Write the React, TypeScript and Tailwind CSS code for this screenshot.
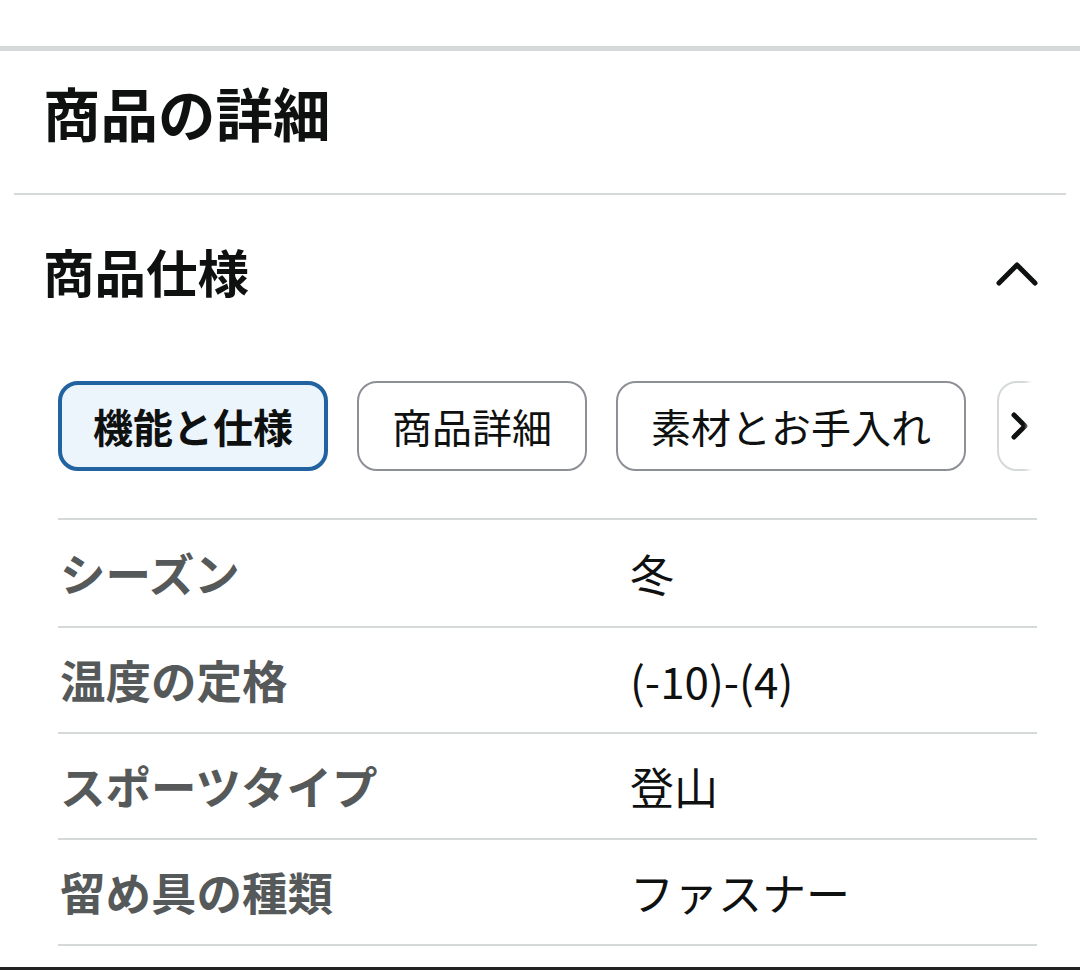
import { ReactNode } from 'react';

const font = { fontFamily: '"Noto Sans CJK JP", "Noto Sans", sans-serif' };

const specs = [
    { label: 'シーズン', value: '冬' },
    { label: '温度の定格', value: '(-10)-(4)' },
    { label: 'スポーツタイプ', value: '登山' },
    { label: '留め具の種類', value: 'ファスナー' },
];

function Tab({ children, active, width }: { children: ReactNode; active?: boolean; width: string }) {
    return (
        <div
            className={`${width} h-[90px] shrink-0 flex items-center justify-center rounded-[20px] text-[40px] leading-none text-[#0f1111] ${
                active ? 'border-[4px] border-[#2162a1] bg-[#edf5fc] font-bold' : 'border-2 border-[#8d9096] bg-white'
            }`}
        >
            {children}
        </div>
    );
}

export default function App() {
    return (
        <div className="w-[1080px] h-[970px] bg-white flex flex-col overflow-hidden" style={font}>
            <div className="h-[46px] shrink-0" />
            <div className="h-[5px] shrink-0 bg-[#d5d9d9]" />

            <div className="h-[142px] shrink-0 flex items-center pl-[43px] pb-[18px]">
                <h1 className="text-[57.5px] font-bold leading-none text-[#0f1111]">商品の詳細</h1>
            </div>
            <div className="mx-[14px] h-[2px] shrink-0 bg-[#d5d9d9]" />

            <div className="h-[158px] shrink-0 flex items-center justify-between pl-[43px] pr-[42px] pb-[6px]">
                <h2 className="text-[51.5px] font-bold leading-none text-[#0f1111]">商品仕様</h2>
                <svg width="42" height="28" viewBox="0 0 42 28" fill="none" className="mt-[4px]">
                    <path d="M3 24 L21 6 L39 24" stroke="#0f1111" strokeWidth="5" strokeLinecap="round" strokeLinejoin="round" />
                </svg>
            </div>

            <div className="mt-[28px] ml-[58px] w-[974px] relative overflow-hidden shrink-0">
                <div className="flex gap-[29px]">
                    <Tab active width="w-[270px]">機能と仕様</Tab>
                    <Tab width="w-[230px]">商品詳細</Tab>
                    <Tab width="w-[350px]">素材とお手入れ</Tab>
                    <div className="w-[120px] h-[90px] shrink-0 ml-[2px] flex items-center pl-[10px] rounded-[20px] border-2 border-[#d5d9d9] bg-white">
                        <svg width="22" height="30" viewBox="0 0 22 30" fill="none">
                            <path d="M5 4 L16 15 L5 26" stroke="#0f1111" strokeWidth="5" strokeLinecap="round" strokeLinejoin="round" />
                        </svg>
                    </div>
                </div>
                <div className="absolute right-0 top-0 h-full w-[8px] bg-gradient-to-l from-white to-transparent" />
            </div>

            <div className="mt-[47px] ml-[58px] w-[979px] shrink-0">
                {specs.map((s, i) => (
                    <div
                        key={s.label}
                        className={`${i === 0 ? 'h-[108px]' : 'h-[106px]'} border-t-2 border-[#d5d9d9] flex items-center`}
                    >
                        <div className="w-[572px] pl-[2px] text-[45.5px] font-bold leading-none text-[#565959]">{s.label}</div>
                        <div className="text-[44px] leading-none text-[#0f1111]">{s.value}</div>
                    </div>
                ))}
                <div className="h-[2px] bg-[#d5d9d9]" />
            </div>

            <div className="flex-1" />
            <div className="h-[3px] shrink-0 bg-[#222222]" />
        </div>
    );
}
